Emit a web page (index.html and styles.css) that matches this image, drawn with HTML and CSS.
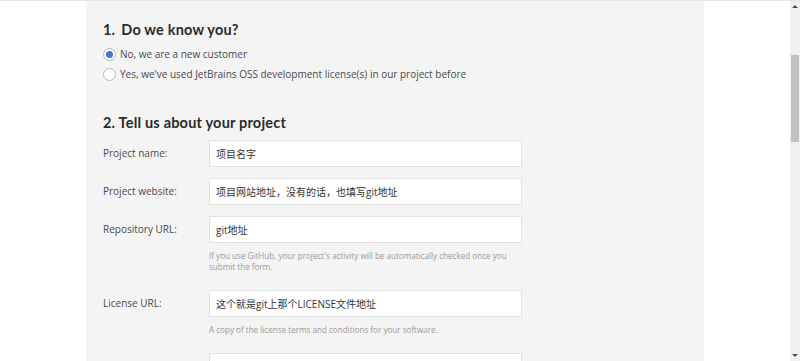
FILE: index.html
```html
<!DOCTYPE html>
<html lang="en">

<head>
  <meta charset="UTF-8" />
  <meta name="viewport" content="width=device-width, initial-scale=1.0" />
  <title>Open Source License Request</title>
  <link rel="stylesheet" href="styles.css">
</head>

<body>
  <div class="page">
    <main class="content">
      <form class="form-panel">
        <!-- Step 1 -->
        <section class="step">
          <h2 class="step-title"><span class="num">1.</span>Do we know you?</h2>
          <label class="radio-row">
            <input type="radio" name="known" checked>
            <span>No, we are a new customer</span>
          </label>
          <label class="radio-row">
            <input type="radio" name="known">
            <span>Yes, we've used JetBrains OSS development license(s) in our project before</span>
          </label>
        </section>

        <!-- Step 2 -->
        <section class="step step-project">
          <h2 class="step-title">2. Tell us about your project</h2>

          <div class="field">
            <label class="field-label">Project name:</label>
            <div class="field-body">
              <input class="text-input" type="text" value="项目名字">
            </div>
          </div>

          <div class="field">
            <label class="field-label">Project website:</label>
            <div class="field-body">
              <input class="text-input" type="text" value="项目网站地址，没有的话，也填写git地址">
            </div>
          </div>

          <div class="field">
            <label class="field-label">Repository URL:</label>
            <div class="field-body">
              <input class="text-input" type="text" value="git地址">
              <p class="hint">If you use GitHub, your project's activity will be automatically checked once you submit the form.</p>
            </div>
          </div>

          <div class="field">
            <label class="field-label">License URL:</label>
            <div class="field-body">
              <input class="text-input" type="text" value="这个就是git上那个LICENSE文件地址">
              <p class="hint">A copy of the license terms and conditions for your software.</p>
            </div>
          </div>

          <div class="field">
            <label class="field-label"></label>
            <div class="field-body">
              <input class="text-input" type="text" value="">
            </div>
          </div>
        </section>
      </form>
    </main>

    <!-- scrollbar of the captured window -->
    <div class="scrollbar">
      <span class="arrow up"></span>
      <span class="thumb"></span>
      <span class="arrow down"></span>
    </div>
  </div>
</body>

</html>
```

FILE: styles.css
```css
/* Reset */
* {
  margin: 0;
  padding: 0;
  box-sizing: border-box;
}

:root {
  --panel-bg: #f4f4f4;
  --text-main: #333333;
  --text-label: #4a4a4a;
  --text-hint: #9a9a9a;
  --border: #e2e2e2;
  --accent: #3d78d8;
}

body {
  font-family: 'Open Sans', 'Noto Sans CJK SC', sans-serif;
  background: #ffffff;
  color: var(--text-main);
  height: 361px;
  overflow: hidden;
}

.page {
  display: flex;
  height: 361px;
  border-top: 1px solid #e6e6e6;
}

.content {
  flex: 1;
  display: flex;
  justify-content: center;
}

/* Grey form panel */
.form-panel {
  width: 618px;
  background: var(--panel-bg);
  padding: 20px 17px 0;
}

.step-title {
  font-family: 'Lato', 'Open Sans', sans-serif;
  font-weight: 700;
  font-size: 14.5px;
  color: #2b2b2b;
  letter-spacing: 0.2px;
  margin-bottom: 6px;
}

.step-title .num {
  margin-right: 6px;
}

.radio-row {
  display: flex;
  align-items: center;
  gap: 4px;
  font-size: 10px;
  color: var(--text-label);
  height: 20px;
}

.radio-row input {
  appearance: none;
  width: 13px;
  height: 13px;
  border-radius: 50%;
  border: 1px solid #b9b9b9;
  background: #ffffff;
  display: grid;
  place-items: center;
}

.radio-row input:checked::after {
  content: "";
  width: 7px;
  height: 7px;
  border-radius: 50%;
  background: var(--accent);
}

.step-project {
  margin-top: 30px;
}

.step-project .step-title {
  margin-bottom: 9px;
}

/* Form rows */
.field {
  display: flex;
  margin-bottom: 11px;
}

.field-label {
  width: 106px;
  flex-shrink: 0;
  font-size: 10px;
  color: var(--text-label);
  line-height: 27px;
}

.field-body {
  width: 313px;
}

.text-input {
  display: block;
  width: 100%;
  height: 27px;
  border: 1px solid var(--border);
  background: #ffffff;
  padding: 0 6px;
  font-family: 'Open Sans', 'Noto Sans CJK SC', sans-serif;
  font-size: 10px;
  color: #333333;
  outline: none;
}

.hint {
  font-size: 8.1px;
  line-height: 11px;
  color: var(--text-hint);
  margin-top: 7px;
  margin-bottom: 7px;
}

/* Scrollbar of the window */
.scrollbar {
  width: 10px;
  background: #f0f0f0;
  position: relative;
  display: flex;
  flex-direction: column;
  align-items: center;
}

.scrollbar .thumb {
  position: absolute;
  top: 54px;
  left: 1px;
  width: 8px;
  height: 87px;
  background: #c1c1c1;
}

.scrollbar .arrow {
  width: 0;
  height: 0;
  border-left: 3px solid transparent;
  border-right: 3px solid transparent;
}

.scrollbar .up {
  margin-top: 4px;
  border-bottom: 3px solid #505050;
}

.scrollbar .down {
  margin-top: auto;
  margin-bottom: 4px;
  border-top: 3px solid #505050;
}
```
